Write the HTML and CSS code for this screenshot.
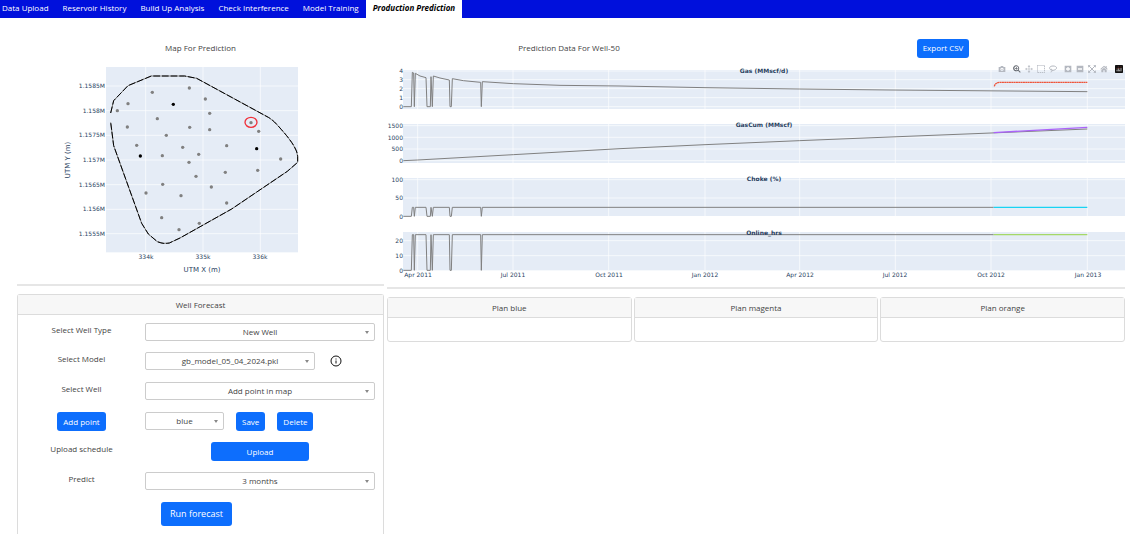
FILE: index.html
```html
<!DOCTYPE html>
<html lang="en">
<head>
  <meta charset="utf-8">
  <title>Production Prediction</title>
  <link rel="stylesheet" href="styles.css">
</head>
<body>
  <nav class="tabs">
    <a class="tab" href="#">Data Upload</a>
    <a class="tab" href="#">Reservoir History</a>
    <a class="tab" href="#">Build Up Analysis</a>
    <a class="tab" href="#">Check Interference</a>
    <a class="tab" href="#">Model Training</a>
    <a class="tab active" href="#">Production Prediction</a>
  </nav>

  <main class="page">
    <section class="left">
      <div class="head">Map For Prediction</div>
      <svg class="plot" viewBox="0 0 367 224">
        <svg x="33" y="0" width="260" height="220" viewBox="0 0 780 660">
          <rect class="plot-bg" x="168" y="21" width="576" height="556"/>
          <path class="grid" d="M168 78H744M168 152H744M168 226H744M168 300H744M168 374H744M168 448H744M168 521H744M287 21V577M459 21V577M631 21V577"/>
          <path class="border-grey" d="M182 159L191 122L234 77L304 48H404L440 55L655 172Q670 180 690 204Q743 262 743 290V307L712 334L545 447L390 534L358 549Q340 553 322 545L295 522L275 490L191 257L182 187"/>
          <path class="border-dash" d="M182 159L191 122L234 77L304 48H404L440 55L655 172Q670 180 690 204Q743 262 743 290V307L712 334L545 447L390 534L358 549Q340 553 322 545L295 522L275 490L191 257L182 187"/>
          <g class="wells">
            <circle cx="307" cy="97" r="5"/><circle cx="418" cy="84" r="5"/><circle cx="234" cy="131" r="5"/>
            <circle cx="202" cy="152" r="5"/><circle cx="466" cy="117" r="5"/><circle cx="479" cy="160" r="5"/>
            <circle cx="322" cy="176" r="5"/><circle cx="232" cy="201" r="5"/><circle cx="419" cy="202" r="5"/>
            <circle cx="479" cy="209" r="5"/><circle cx="349" cy="226" r="5"/><circle cx="626" cy="214" r="5"/>
            <circle cx="260" cy="256" r="5"/><circle cx="398" cy="262" r="5"/><circle cx="530" cy="257" r="5"/>
            <circle cx="337" cy="287" r="5"/><circle cx="446" cy="283" r="5"/><circle cx="417" cy="307" r="5"/>
            <circle cx="692" cy="297" r="5"/><circle cx="623" cy="331" r="5"/><circle cx="526" cy="337" r="5"/>
            <circle cx="438" cy="349" r="5"/><circle cx="338" cy="373" r="5"/><circle cx="484" cy="381" r="5"/>
            <circle cx="288" cy="399" r="5"/><circle cx="393" cy="407" r="5"/><circle cx="530" cy="429" r="5"/>
            <circle cx="335" cy="473" r="5"/><circle cx="448" cy="490" r="5"/><circle cx="387" cy="509" r="5"/>
            <circle cx="603" cy="188" r="5"/>
          </g>
          <g class="wells-active">
            <circle cx="370" cy="133" r="5"/><circle cx="271" cy="288" r="5"/><circle cx="620" cy="266" r="5"/>
          </g>
          <ellipse class="selected" cx="603" cy="187" rx="18" ry="15"/>
        </svg>
        <g class="tick end">
          <text x="88" y="28">1.1585M</text>
          <text x="88" y="53">1.158M</text>
          <text x="88" y="77">1.1575M</text>
          <text x="88" y="102">1.157M</text>
          <text x="88" y="127">1.1565M</text>
          <text x="88" y="151">1.156M</text>
          <text x="88" y="176">1.1555M</text>
        </g>
        <g class="tick mid">
          <text x="129" y="199">334k</text>
          <text x="186" y="199">335k</text>
          <text x="243" y="199">336k</text>
        </g>
        <g class="axis mid">
          <text x="185" y="212">UTM X (m)</text>
          <text transform="translate(53 100) rotate(-90)">UTM Y (m)</text>
        </g>
      </svg>
      <hr class="line">

      <div class="card form-card">
        <div class="card-head">Well Forecast</div>
        <form class="form">
          <div class="row first">
            <label for="wellType">Select Well Type</label>
            <div class="field"><span class="select"><select id="wellType"><option>New Well</option></select></span></div>
          </div>
          <div class="row">
            <label for="model">Select Model</label>
            <div class="field">
              <span class="select model"><select id="model"><option>gb_model_05_04_2024.pkl</option></select></span>
              <svg class="info" viewBox="0 0 24 24"><circle cx="12" cy="12" r="10"/><path d="M12 11v6M12 7v2"/></svg>
            </div>
          </div>
          <div class="row">
            <label for="well">Select Well</label>
            <div class="field"><span class="select"><select id="well"><option>Add point in map</option></select></span></div>
          </div>
          <div class="row">
            <div class="cell"><button type="button" class="btn">Add point</button></div>
            <div class="field">
              <span class="select color"><select id="color" aria-label="Color"><option>blue</option></select></span>
              <button type="button" class="btn">Save</button>
              <button type="button" class="btn">Delete</button>
            </div>
          </div>
          <div class="row">
            <label for="upload">Upload schedule</label>
            <div class="field center"><button type="button" class="btn upload" id="upload">Upload</button></div>
          </div>
          <div class="row">
            <label for="predict">Predict</label>
            <div class="field"><span class="select"><select id="predict"><option>3 months</option></select></span></div>
          </div>
          <button type="button" class="btn run">Run forecast</button>
        </form>
      </div>
    </section>

    <section class="right">
      <div class="head two">
        <span>Prediction Data For Well-50</span>
        <span><button type="button" class="btn">Export CSV</button></span>
      </div>
      <div class="graph">
        <svg class="plot" viewBox="0 0 738 227">
          <svg x="0" y="0" width="738" height="227" viewBox="0 0 2214 681">
            <g class="plot-bg">
              <rect x="48" y="30" width="2166" height="117"/>
              <rect x="48" y="192" width="2166" height="117"/>
              <rect x="48" y="354" width="2166" height="114"/>
              <rect x="48" y="516" width="2166" height="115"/>
            </g>
            <path class="grid" d="M48 33H2214M48 59H2214M48 86H2214M48 113H2214M48 140H2214M48 197H2214M48 232H2214M48 267H2214M48 302H2214M48 359H2214M48 414H2214M48 542H2214M48 587H2214"/>
            <path class="grid" d="M92 30V147M378 30V147M665 30V147M954 30V147M1238 30V147M1525 30V147M1812 30V147M2101 30V147M92 192V309M378 192V309M665 192V309M954 192V309M1238 192V309M1525 192V309M1812 192V309M2101 192V309"/>
            <path class="grid" d="M92 354V468M378 354V468M665 354V468M954 354V468M1238 354V468M1525 354V468M1812 354V468M2101 354V468M92 516V631M378 516V631M665 516V631M954 516V631M1238 516V631M1525 516V631M1812 516V631M2101 516V631"/>
            <g class="fact">
              <path d="M49 140H73L76 37L80 39L82 140L85 40L99 48L117 53L120 140H130L132 50L136 140L139 48L159 54L187 60L189 140H193L196 56L229 62L281 67L283 140L286 65L379 71L519 76L699 78L954 83L1237 87L1509 90L2101 95"/>
              <path d="M49 302L92 300L379 284L699 266L954 254L1237 242L1509 231L1812 219L2101 207"/>
              <path d="M49 469H73L76 442H80L82 469L85 442H117L120 469H130L132 442L136 469L139 442H187L189 469H193L196 442H281L283 469L286 442H1820"/>
              <path d="M49 631H73L76 524H80L82 631L85 524H117L120 631H130L132 524L136 631L139 524H187L189 631H193L196 524H281L283 631L286 524H1820"/>
            </g>
            <path class="forecast gas" d="M1822 79Q1825 67 1840 67H2101"/>
            <path class="forecast cum" d="M1820 218L2101 202"/>
            <path class="forecast choke" d="M1820 442H2101"/>
            <path class="forecast hours" d="M1820 524H2101"/>
          </svg>
          <g class="tick end">
            <text x="16" y="13">4</text><text x="16" y="22">3</text><text x="16" y="31">2</text><text x="16" y="40">1</text><text x="16" y="49">0</text>
            <text x="16" y="68">1500</text><text x="16" y="80">1000</text><text x="16" y="91">500</text><text x="16" y="103">0</text>
            <text x="16" y="122">100</text><text x="16" y="140">50</text><text x="16" y="159">0</text>
            <text x="16" y="183">20</text><text x="16" y="198">10</text><text x="16" y="213">0</text>
          </g>
          <g class="tick mid">
            <text x="31" y="217">Apr 2011</text>
            <text x="126" y="217">Jul 2011</text>
            <text x="222" y="217">Oct 2011</text>
            <text x="318" y="217">Jan 2012</text>
            <text x="413" y="217">Apr 2012</text>
            <text x="508" y="217">Jul 2012</text>
            <text x="604" y="217">Oct 2012</text>
            <text x="701" y="217">Jan 2013</text>
          </g>
          <g class="title mid">
            <text x="377" y="13">Gas (MMscf/d)</text>
            <text x="377" y="67">GasCum (MMscf)</text>
            <text x="377" y="121">Choke (%)</text>
            <text x="377" y="175">Online_hrs</text>
          </g>
        </svg>
        <div class="modebar">
          <button type="button" aria-label="Download plot"><svg viewBox="0 0 24 24"><path fill-rule="evenodd" d="M2 6h5l2-3h6l2 3h5v15H2zM12 8a5 5 0 1 0 0 10a5 5 0 1 0 0-10M12 11a2 2 0 1 1 0 4a2 2 0 1 1 0-4"/></svg></button>
          <button type="button" class="group on" aria-label="Zoom"><svg viewBox="0 0 24 24"><path fill-rule="evenodd" d="M10 1a9 9 0 1 0 5 16l6 6 2-2-6-6A9 9 0 0 0 10 1M10 4a6 6 0 1 1 0 12a6 6 0 1 1 0-12M9 6h2v3h3v2h-3v3H9v-3H6V9h3z"/></svg></button>
          <button type="button" aria-label="Pan"><svg viewBox="0 0 24 24"><path d="M12 0l4 5h-3v6h6V8l5 4-5 4v-3h-6v6h3l-4 5-4-5h3v-6H5v3l-5-4 5-4v3h6V5H8z"/></svg></button>
          <button type="button" aria-label="Box select"><svg viewBox="0 0 24 24"><path class="dash" d="M1 1H23V23H1Z"/></svg></button>
          <button type="button" aria-label="Lasso select"><svg viewBox="0 0 24 24"><path class="stroke" d="M6 15C-2 10 2 3 12 3S26 9 20 13S8 17 6 14S10 13 10 16S8 20 5 21"/></svg></button>
          <button type="button" class="group" aria-label="Zoom in"><svg viewBox="0 0 24 24"><path fill-rule="evenodd" d="M2 2h20v20H2zM10 6v4H6v4h4v4h4v-4h4v-4h-4V6z"/></svg></button>
          <button type="button" aria-label="Zoom out"><svg viewBox="0 0 24 24"><path fill-rule="evenodd" d="M2 2h20v20H2zM6 10v4h12v-4z"/></svg></button>
          <button type="button" aria-label="Autoscale"><svg viewBox="0 0 24 24"><path class="stroke" d="M2 2L22 22M22 2L2 22M1 7V1H7M17 1H23V7M1 17V23H7M17 23H23V17"/></svg></button>
          <button type="button" aria-label="Reset axes"><svg viewBox="0 0 24 24"><path d="M12 2L1 12l2 2 9-8 9 8 2-2-3-3V3h-3v3zM12 8l-8 7v7h6v-6h4v6h6v-7z"/></svg></button>
          <button type="button" class="group logo" aria-label="Plotly"><svg viewBox="0 0 24 24"><rect width="24" height="24" rx="2"/><path d="M6 19v-5M10 19v-9M14 19v-5M18 19V9"/><path class="dots" d="M6 9v2M10 5v2M14 9v2M18 5v2"/></svg></button>
        </div>
      </div>
      <hr class="line">

      <div class="plans">
        <div class="card"><div class="card-head">Plan blue</div><div class="card-body"></div></div>
        <div class="card"><div class="card-head">Plan magenta</div><div class="card-body"></div></div>
        <div class="card"><div class="card-head">Plan orange</div><div class="card-body"></div></div>
      </div>
    </section>
  </main>
</body>
</html>
```
FILE: styles.css
```css
* {
  box-sizing: border-box;
}

body {
  margin: 0;
  background-color: #fff;
  color: #444;
  font-family: "Open Sans", "Noto Sans", sans-serif;
  font-size: 8px;
  line-height: 12px;
}

.tabs {
  display: flex;
  height: 18px;
  background-color: #0010dc;
}

.tab {
  padding: 2px 7px;
  color: #fff;
  text-decoration: none;
}

.tab:first-child {
  padding-left: 2px;
}

.tab.active {
  background-color: #fff;
  color: #000;
  font-weight: bold;
  font-style: italic;
}

.page {
  display: grid;
  grid-template-columns: 367fr 738fr;
  gap: 3px;
  padding: 18px 5px 0 17px;
}

.head {
  display: flex;
  align-items: center;
  justify-content: center;
  height: 24px;
}

.head.two {
  display: grid;
  grid-template-columns: 1fr 1fr;
  gap: 10px;
  text-align: center;
}

.plot {
  display: block;
  width: 100%;
}

.plot text {
  font-family: "DejaVu Sans", sans-serif;
  fill: #2a3f5f;
}

.tick {
  font-size: 6px;
}

.axis {
  font-size: 7px;
}

.title {
  font-size: 6px;
  font-weight: bold;
}

.end {
  text-anchor: end;
}

.mid {
  text-anchor: middle;
}

.plot-bg {
  fill: #e5ecf6;
}

.grid {
  stroke: #fff;
  stroke-width: 2;
}

.border-grey,
.border-dash {
  fill: none;
  stroke: #808080;
  stroke-width: 3;
}

.border-dash {
  stroke: #000;
  stroke-dasharray: 20 6;
}

.wells {
  fill: #808080;
}

.wells-active {
  fill: #000;
}

.selected {
  fill: none;
  stroke: #f0303a;
  stroke-width: 4;
}

.fact {
  fill: none;
  stroke: #808080;
  stroke-width: 3;
}

.forecast {
  fill: none;
  stroke-width: 4;
}

.gas {
  stroke: #ef553b;
  stroke-dasharray: 6 1;
}

.cum {
  stroke: #ab63fa;
}

.choke {
  stroke: #19d3f3;
}

.hours {
  stroke: #a5d867;
}

.line {
  height: 2px;
  margin: 0 0 8px;
  border: 0;
  background-color: #e6e6e6;
}

.card {
  border: 1px solid #dcdcdc;
  border-radius: 3px;
}

.card-head {
  height: 20px;
  padding: 4px;
  border-bottom: 1px solid #dcdcdc;
  background-color: #f7f7f7;
  text-align: center;
}

.card-body {
  height: 23px;
}

.form-card {
  border-bottom: 0;
  border-radius: 3px 3px 0 0;
}

.form {
  display: flex;
  flex-direction: column;
  padding: 8px 8px 8px 0;
}

.row {
  display: grid;
  grid-template-columns: 127fr 230fr;
  height: 30px;
}

.row.first {
  height: 29px;
}

.row label,
.cell {
  text-align: center;
}

.row label {
  padding-top: 1px;
}

.field {
  display: flex;
  align-items: flex-start;
  gap: 12px;
}

.field.center {
  justify-content: center;
}

.select {
  position: relative;
  flex: 1;
  height: 18px;
}

.select.model {
  flex: 0 0 170px;
}

.select.color {
  flex: 0 0 79px;
}

.select select {
  display: block;
  width: 100%;
  height: 18px;
  padding: 0;
  appearance: none;
  border: 1px solid #ccc;
  border-radius: 2px;
  background-color: #fff;
  color: #444;
  font: inherit;
  text-align: center;
  text-align-last: center;
}

.select::after {
  content: "";
  position: absolute;
  top: 8px;
  right: 6px;
  border: 2px solid transparent;
  border-top: 3px solid #888;
}

.info {
  width: 12px;
  height: 18px;
  margin-left: 3px;
  fill: none;
  stroke: #111;
  stroke-width: 2;
}

.btn {
  height: 19px;
  padding: 0 6px;
  border: 0;
  border-radius: 3px;
  background-color: #0d6efd;
  color: #fff;
  font: inherit;
}

.upload {
  width: 98px;
}

.run {
  align-self: center;
  height: 24px;
  padding: 0 9px;
  font-size: 9px;
}

.graph {
  position: relative;
}

.modebar {
  position: absolute;
  top: 4px;
  right: 0;
  display: flex;
}

.modebar button {
  width: 12px;
  height: 10px;
  padding: 1px 2px;
  border: 0;
  background: none;
}

.modebar .group {
  margin-left: 3px;
}

.modebar svg {
  display: block;
  width: 8px;
  height: 8px;
  fill: #b4b8c0;
}

.modebar .on svg {
  fill: #666a72;
}

.modebar .stroke,
.modebar .dash {
  fill: none;
  stroke: #b4b8c0;
  stroke-width: 3;
}

.modebar .dash {
  stroke-dasharray: 4 2;
}

.modebar .logo svg {
  fill: #111;
  stroke: #fff;
  stroke-width: 2;
}

.modebar .logo rect {
  stroke: none;
}

.modebar .dots {
  stroke: #ef553b;
}

.plans {
  display: grid;
  grid-template-columns: repeat(3, 1fr);
  gap: 2px;
}
```
